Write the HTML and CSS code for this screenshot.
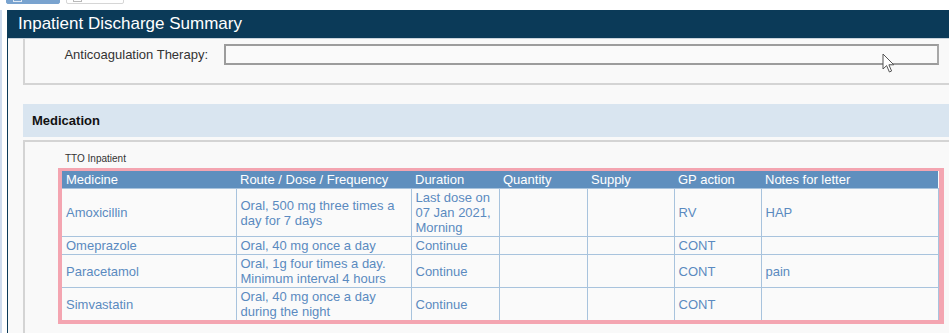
FILE: index.html
```html
<!DOCTYPE html>
<html lang="en">
<head>
  <meta charset="UTF-8">
  <title>Inpatient Discharge Summary</title>
  <link rel="stylesheet" href="styles.css">
</head>
<body>
  <div class="toolbar">
    <span class="tool-btn tool-primary"><span class="tool-icon"></span></span>
    <span class="tool-btn"><span class="tool-icon"></span></span>
  </div>
  <div class="frame">
    <div class="panel">
      <div class="panel-title">Inpatient Discharge Summary</div>
      <div class="panel-body">
        <div class="box box-open">
          <div class="field-row">
            <label class="field-label">Anticoagulation Therapy:</label>
            <input class="field-input" type="text">
          </div>
        </div>

        <div class="section-head">Medication</div>
        <div class="box box-meds">
          <div class="tto-label">TTO Inpatient</div>
          <div class="tto-frame">
            <table class="med-table">
              <colgroup>
                <col style="width:174px"><col style="width:175px"><col style="width:88px"><col style="width:88px"><col style="width:87px"><col style="width:87px"><col style="width:177px">
              </colgroup>
              <thead>
                <tr>
                  <th>Medicine</th>
                  <th>Route / Dose / Frequency</th>
                  <th>Duration</th>
                  <th>Quantity</th>
                  <th>Supply</th>
                  <th>GP action</th>
                  <th>Notes for letter</th>
                </tr>
              </thead>
              <tbody>
                <tr>
                  <td>Amoxicillin</td>
                  <td>Oral, 500 mg three times a day for 7 days</td>
                  <td>Last dose on 07 Jan 2021, Morning</td>
                  <td></td>
                  <td></td>
                  <td>RV</td>
                  <td>HAP</td>
                </tr>
                <tr>
                  <td>Omeprazole</td>
                  <td>Oral, 40 mg once a day</td>
                  <td>Continue</td>
                  <td></td>
                  <td></td>
                  <td>CONT</td>
                  <td></td>
                </tr>
                <tr>
                  <td>Paracetamol</td>
                  <td>Oral, 1g four times a day. Minimum interval 4 hours</td>
                  <td>Continue</td>
                  <td></td>
                  <td></td>
                  <td>CONT</td>
                  <td>pain</td>
                </tr>
                <tr>
                  <td>Simvastatin</td>
                  <td>Oral, 40 mg once a day during the night</td>
                  <td>Continue</td>
                  <td></td>
                  <td></td>
                  <td>CONT</td>
                  <td></td>
                </tr>
              </tbody>
            </table>
          </div>
        </div>
      </div>
    </div>
  </div>

  <svg class="cursor" width="14" height="22" viewBox="0 0 14 22">
    <path d="M1 1 L1 16 L4.6 12.6 L7.4 19 L9.6 18 L6.9 11.8 L11.8 11.8 Z" fill="#fff" stroke="#555" stroke-width="1" stroke-linejoin="round"/>
  </svg>
</body>
</html>
```

FILE: styles.css
```css
body {
  margin: 0;
  font-family: "Liberation Sans", Arial, sans-serif;
  background-color: #fff;
  color: #222;
  overflow: hidden;
}
.toolbar {
  height: 10px;
  overflow: hidden;
  display: flex;
  gap: 6px;
  padding-left: 6px;
}
.tool-btn {
  display: block;
  margin-top: -16px;
  height: 20px;
  width: 58px;
  padding: 0 0 0 6px;
  background-color: #fff;
  border: 1px solid #d6d6d6;
  border-radius: 2px;
  box-sizing: border-box;
}
.tool-primary {
  width: 54px;
  background-color: #79a3cf;
  border-color: #79a3cf;
}
.tool-icon {
  display: block;
  margin-top: 8px;
  width: 9px;
  height: 9px;
  border: 1px solid #b9b9b9;
  box-sizing: border-box;
}
.tool-primary .tool-icon {
  border-color: #dfe9f4;
}
.frame {
  border-left: 2px solid #cfdcee;
  padding-left: 5px;
}
.panel {
  border-left: 1px solid #0b3a58;
  background-color: #f9f9f9;
  height: 323px;
}
.panel-title {
  background-color: #0b3a58;
  color: #fff;
  font-size: 17px;
  height: 28px;
  line-height: 28px;
  padding-left: 10px;
  border-bottom: 1px solid #c9d3dc;
}
.panel-body {
  padding-left: 15px;
}
.box {
  border-left: 2px solid #d4d4d4;
  background-color: #f9f9f9;
}
.box-open {
  border-bottom: 2px solid #d4d4d4;
  padding: 5px 0 18px 0;
}
.field-row {
  display: grid;
  grid-template-columns: 183px 715px;
  column-gap: 16px;
  align-items: center;
}
.field-label {
  text-align: right;
  font-size: 13px;
  color: #333;
}
.field-input {
  height: 21px;
  margin: 0;
  box-sizing: border-box;
  border: 2px solid #9c9c9c;
  border-right-color: #a8a8a8;
  background-color: #fafafa;
  font-family: inherit;
}
.section-head {
  margin-top: 19px;
  height: 33px;
  line-height: 33px;
  padding-left: 9px;
  background-color: #d9e5f0;
  font-size: 13px;
  font-weight: bold;
  color: #111;
}
.box-meds {
  margin-top: 3px;
  border-top: 2px solid #d4d4d4;
  padding: 11px 0 20px 0;
}
.tto-label {
  font-size: 10px;
  color: #333;
  margin-left: 40px;
  line-height: 12px;
}
.tto-frame {
  display: inline-block;
  margin-top: 3px;
  margin-left: 33px;
  border: 4px solid #f4a5b1;
  border-right-width: 5px;
  border-top-width: 3px;
}
.med-table {
  border-collapse: collapse;
  table-layout: fixed;
  width: 876px;
  font-size: 13px;
  background-color: #fafafa;
}
.med-table th {
  background-color: #5f8fbe;
  color: #fff;
  font-weight: normal;
  text-align: left;
  padding: 1px 4px 1px 4px;
  line-height: 15px;
  border-bottom: 1px solid #a8c3dd;
}
.med-table td {
  color: #5a8ac0;
  padding: 1px 4px 1px 4px;
  line-height: 15px;
  vertical-align: middle;
  border: 1px solid #a8c3dd;
}
.med-table td:first-child {
  border-left: none;
}
.med-table tr:last-child td {
  border-bottom: none;
}
.cursor {
  position: absolute;
  left: 882px;
  top: 53px;
}
```
